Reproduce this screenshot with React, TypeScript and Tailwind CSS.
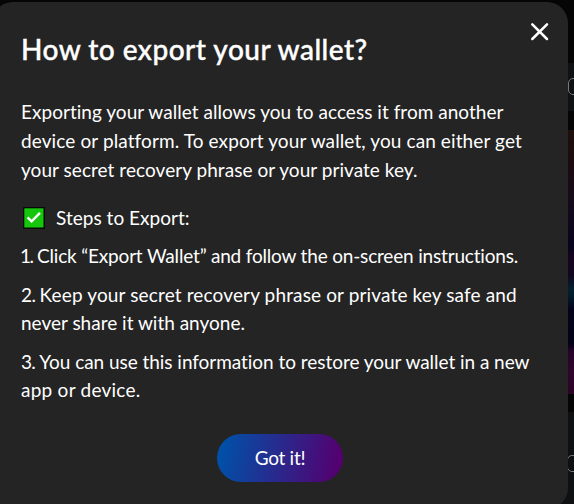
function CloseIcon() {
  return (
    <svg width="20" height="20" viewBox="0 0 20 20" fill="none" className="block">
      <path d="M2.3 2.3 17 17M17 2.3 2.3 17" stroke="white" strokeWidth="2.5" strokeLinecap="round" />
    </svg>
  );
}

function CheckBadge() {
  return (
    <svg width="22" height="22" viewBox="0 0 22 22" fill="none" className="block">
      <rect x="0" y="0" width="22" height="22" rx="1" fill="#050a05" />
      <rect x="1.3" y="1.3" width="19.2" height="19.2" fill="#16c60c" />
      <path d="M4.6 10.4 8.6 14.3 17 5.8" stroke="white" strokeWidth="2.4" />
    </svg>
  );
}

function PageBehind() {
  return (
    <div className="flex h-[504px] w-[574px] flex-col items-end bg-[#050505]">
      <div className="mt-[63px] h-12 w-5 overflow-hidden bg-[#101112] pt-[15px] pl-[14px]">
        <div className="h-[17px] w-10 rounded-[5px] border border-[#77797a]" />
      </div>
      <div className="mt-[19px] h-[264px] w-5 bg-[linear-gradient(180deg,#1d0f0a_0%,#1b0b12_15%,#150a1b_28%,#08041d_44%,#17051f_49%,#12061f_55%,#04202f_60%,#031b2b_63%,#04031a_68%,#040217_81%,#27042a_84%,#30042b_92%,#2c0426_100%)]" />
      <div className="mt-[18px] h-[92px] w-5 overflow-hidden bg-[#0e1011] pt-[43px] pl-[13px]">
        <div className="h-[17px] w-10 rounded-[5px] border border-[#77797a]" />
      </div>
    </div>
  );
}

export default function App() {
  return (
    <div className="relative h-[504px] w-[574px] overflow-hidden font-['Lato',sans-serif] text-white [font-variant-ligatures:none]">
      <PageBehind />
      <div className="absolute top-[2px] -left-2 flex h-[507px] w-[576px] flex-col rounded-[21px] bg-[#242424] pl-[29px] whitespace-nowrap">
        <button className="absolute top-[19.5px] right-[18.5px]" aria-label="Close">
          <CloseIcon />
        </button>
        <h2 className="mt-[29px] text-[28px] leading-9 font-medium tracking-[0.48px] [-webkit-text-stroke:0.4px_white]">How to export your wallet?</h2>
        <div className="mt-[30px] flex flex-col text-[19px] leading-[29px]">
          <span className="tracking-[0.03px]">Exporting your wallet allows you to access it from another</span>
          <span className="tracking-[0.11px]">device or platform. To export your wallet, you can either get</span>
          <span className="tracking-[0.05px]">your secret recovery phrase or your private key.</span>
        </div>
        <div className="mt-[19px] flex h-[29px] items-center gap-3 pl-[2px] text-[19px] leading-[29px]">
          <CheckBadge />
          <span className="-ml-px tracking-[0.03px]">Steps to Export:</span>
        </div>
        <div className="mt-[10px] flex flex-col gap-[10px] text-[19px] leading-[28.5px]">
          <p className="-ml-px tracking-[-0.18px]">
            <span className="tracking-[-1.6px]">1</span>
            <span className="tracking-[-0.9px]">. </span>Click “Export Wallet” and follow the on-screen instructions.
          </p>
          <p className="flex flex-col">
            <span className="tracking-[0.14px]">
              <span className="tracking-[-0.6px]">2. </span>Keep your secret recovery phrase or private key safe and
            </span>
            <span className="tracking-[0px]">never share it with anyone.</span>
          </p>
          <p className="flex flex-col">
            <span className="tracking-[-0.04px]">
              <span className="tracking-[-0.7px]">3. </span>You can use this information to restore your wallet in a new
            </span>
            <span className="tracking-[0.25px]">app or device.</span>
          </p>
        </div>
        <button className="mt-[29.5px] ml-[196px] h-12 w-[126px] rounded-full bg-[linear-gradient(100deg,#0050a8_5%,#540070_95%)] text-[19px] tracking-[-0.3px]">
          Got it!
        </button>
      </div>
    </div>
  );
}
